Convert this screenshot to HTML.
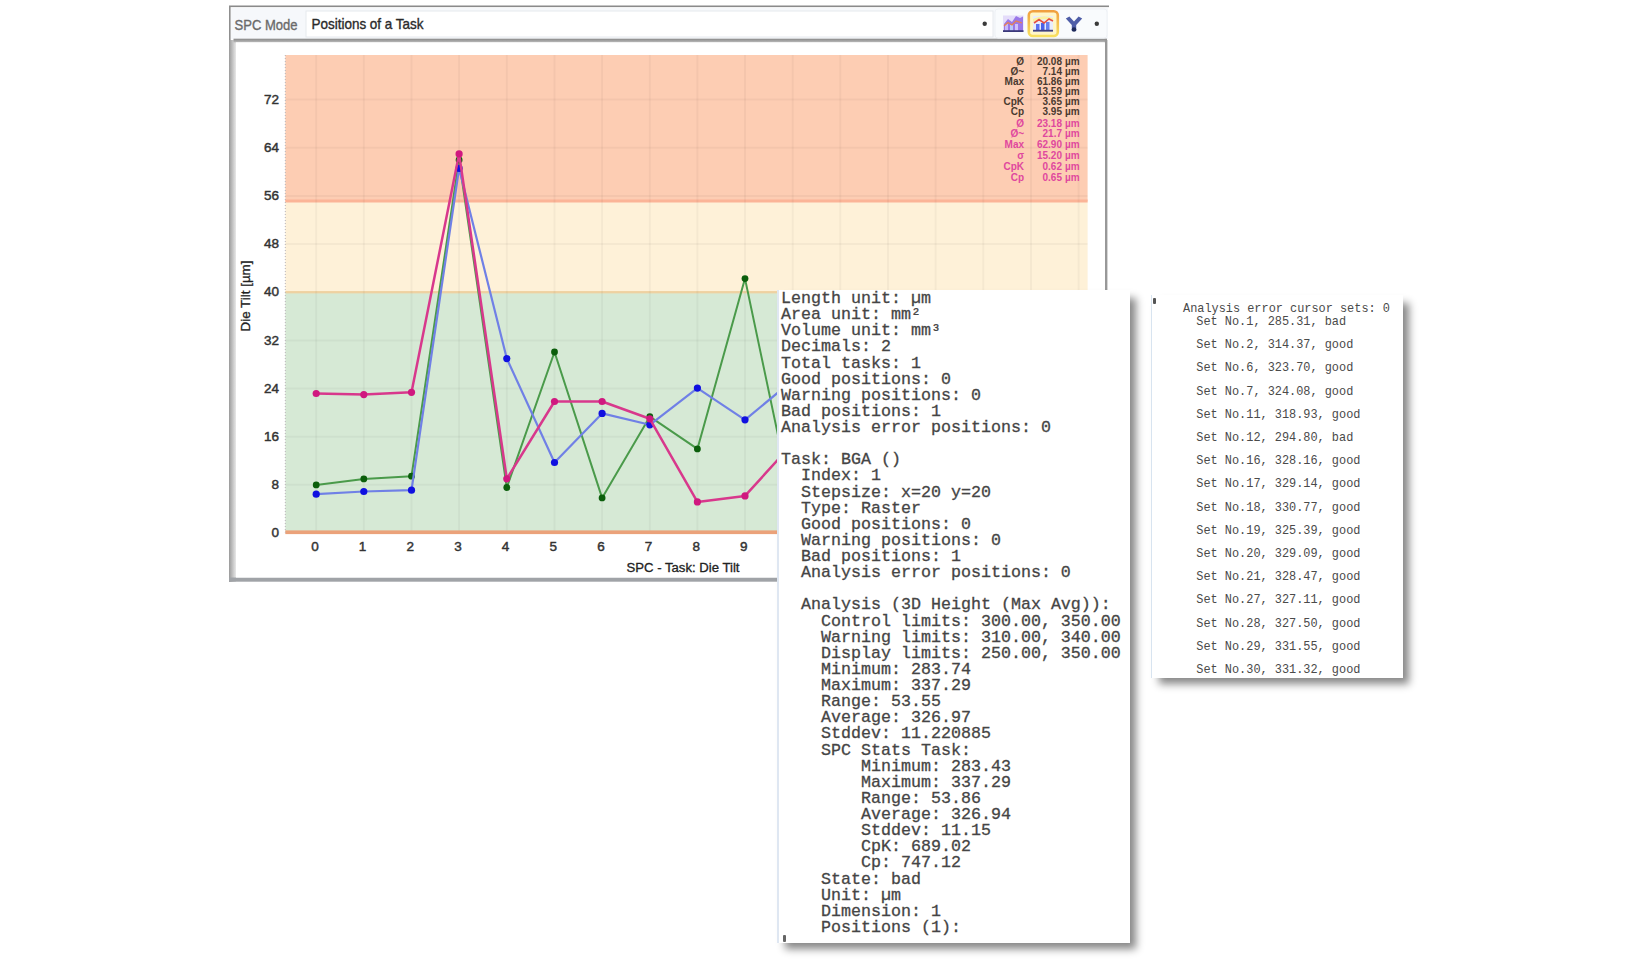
<!DOCTYPE html>
<html><head><meta charset="utf-8"><style>
html,body{margin:0;padding:0;background:#fff;width:1650px;height:979px;overflow:hidden;position:relative}
.pop{position:absolute;background:#fff;box-shadow:7px 7px 8px -1px rgba(0,0,0,0.47);}
.p1{left:777px;top:290px;width:351px;height:653px;border-left:2px solid #dfe7f2}
.p1 pre{margin:0;position:absolute;left:2px;top:1px;-webkit-text-stroke:0.3px #4a4a4a;font-family:"Liberation Mono",monospace;font-size:16.67px;line-height:16.13px;color:#444;}
.p2{left:1151px;top:295px;width:251px;height:383px;border-left:1px solid #d8e4f0}
.p2 .h{position:absolute;left:31px;top:7px;font-family:"Liberation Mono",monospace;font-size:11.9px;color:#4a4a4a;white-space:pre}
.p2 .s{position:absolute;left:44.3px;font-family:"Liberation Mono",monospace;font-size:11.9px;color:#4a4a4a;white-space:pre}
</style></head><body>
<svg width="1650" height="979" viewBox="0 0 1650 979" style="position:absolute;left:0;top:0"><defs><linearGradient id="lb" x1="0" x2="1"><stop offset="0" stop-color="#9a9a9a"/><stop offset="1" stop-color="#e8e8e8"/></linearGradient><linearGradient id="tb" x1="0" y1="0" x2="0" y2="1"><stop offset="0" stop-color="#888"/><stop offset="1" stop-color="#bbb"/></linearGradient></defs><rect x="229.5" y="6" width="880" height="576" fill="#fff"/><rect x="229" y="5.5" width="880" height="1.6" fill="#8a8a8a"/><rect x="231" y="8" width="877" height="31" fill="#f6f8fb"/><rect x="306" y="11" width="687" height="26" fill="#fff" stroke="#e6e9ee" stroke-width="1"/><rect x="229" y="6" width="1.6" height="36" fill="#8f8f8f"/><rect x="229" y="40" width="7" height="542" fill="url(#lb)"/><rect x="233.5" y="38.7" width="873.5" height="3.7" fill="url(#tb)"/><rect x="1104.8" y="40" width="2.6" height="540" fill="#989898"/><rect x="229" y="577.5" width="878" height="4.2" fill="#a0a3a7"/><rect x="236" y="42.5" width="869" height="535" fill="#fff"/><rect x="285.3" y="55.0" width="802.3" height="146.0" fill="#fdcdb3"/><rect x="285.3" y="201.0" width="802.3" height="91.19999999999999" fill="#fef1d8"/><rect x="285.3" y="292.2" width="802.3" height="240.40000000000003" fill="#d6e9d5"/><rect x="285.3" y="199.5" width="802.3" height="3" fill="#fbb497"/><rect x="285.3" y="291.0" width="802.3" height="2.4" fill="#f6d9a8"/><line x1="316.2" y1="55.0" x2="316.2" y2="532.6" stroke="#000" stroke-opacity="0.035" stroke-width="2"/><line x1="363.8" y1="55.0" x2="363.8" y2="532.6" stroke="#000" stroke-opacity="0.035" stroke-width="2"/><line x1="411.5" y1="55.0" x2="411.5" y2="532.6" stroke="#000" stroke-opacity="0.035" stroke-width="2"/><line x1="459.1" y1="55.0" x2="459.1" y2="532.6" stroke="#000" stroke-opacity="0.035" stroke-width="2"/><line x1="506.8" y1="55.0" x2="506.8" y2="532.6" stroke="#000" stroke-opacity="0.035" stroke-width="2"/><line x1="554.5" y1="55.0" x2="554.5" y2="532.6" stroke="#000" stroke-opacity="0.035" stroke-width="2"/><line x1="602.1" y1="55.0" x2="602.1" y2="532.6" stroke="#000" stroke-opacity="0.035" stroke-width="2"/><line x1="649.8" y1="55.0" x2="649.8" y2="532.6" stroke="#000" stroke-opacity="0.035" stroke-width="2"/><line x1="697.4" y1="55.0" x2="697.4" y2="532.6" stroke="#000" stroke-opacity="0.035" stroke-width="2"/><line x1="745.0" y1="55.0" x2="745.0" y2="532.6" stroke="#000" stroke-opacity="0.035" stroke-width="2"/><line x1="792.7" y1="55.0" x2="792.7" y2="532.6" stroke="#000" stroke-opacity="0.035" stroke-width="2"/><line x1="840.3" y1="55.0" x2="840.3" y2="532.6" stroke="#000" stroke-opacity="0.035" stroke-width="2"/><line x1="888.0" y1="55.0" x2="888.0" y2="532.6" stroke="#000" stroke-opacity="0.035" stroke-width="2"/><line x1="935.6" y1="55.0" x2="935.6" y2="532.6" stroke="#000" stroke-opacity="0.035" stroke-width="2"/><line x1="983.3" y1="55.0" x2="983.3" y2="532.6" stroke="#000" stroke-opacity="0.035" stroke-width="2"/><line x1="1031.0" y1="55.0" x2="1031.0" y2="532.6" stroke="#000" stroke-opacity="0.035" stroke-width="2"/><line x1="1078.6" y1="55.0" x2="1078.6" y2="532.6" stroke="#000" stroke-opacity="0.035" stroke-width="2"/><line x1="285.3" y1="484.8" x2="1087.6" y2="484.8" stroke="#000" stroke-opacity="0.035" stroke-width="2"/><line x1="285.3" y1="436.7" x2="1087.6" y2="436.7" stroke="#000" stroke-opacity="0.035" stroke-width="2"/><line x1="285.3" y1="388.5" x2="1087.6" y2="388.5" stroke="#000" stroke-opacity="0.035" stroke-width="2"/><line x1="285.3" y1="340.4" x2="1087.6" y2="340.4" stroke="#000" stroke-opacity="0.035" stroke-width="2"/><line x1="285.3" y1="292.2" x2="1087.6" y2="292.2" stroke="#000" stroke-opacity="0.035" stroke-width="2"/><line x1="285.3" y1="244.0" x2="1087.6" y2="244.0" stroke="#000" stroke-opacity="0.035" stroke-width="2"/><line x1="285.3" y1="195.9" x2="1087.6" y2="195.9" stroke="#000" stroke-opacity="0.035" stroke-width="2"/><line x1="285.3" y1="147.7" x2="1087.6" y2="147.7" stroke="#000" stroke-opacity="0.035" stroke-width="2"/><line x1="285.3" y1="99.6" x2="1087.6" y2="99.6" stroke="#000" stroke-opacity="0.035" stroke-width="2"/><rect x="285.3" y="530.4" width="802.3" height="3.7" fill="#eba27a"/><line x1="285.3" y1="55.0" x2="285.3" y2="532.6" stroke="#b8b4b8" stroke-width="1" stroke-dasharray="1,2"/><polyline points="316.2,484.9 363.8,478.9 411.5,476.2 459.1,160.0 506.8,487.5 554.5,352.0 602.1,497.9 649.8,416.7 697.4,448.9 745.0,278.6 792.7,504.9" fill="none" stroke="#4a9a4a" stroke-width="2.0" stroke-linejoin="round"/><circle cx="316.2" cy="484.9" r="3.4" fill="#0b5e0b"/><circle cx="363.8" cy="478.9" r="3.4" fill="#0b5e0b"/><circle cx="411.5" cy="476.2" r="3.4" fill="#0b5e0b"/><circle cx="459.1" cy="160.0" r="3.4" fill="#0b5e0b"/><circle cx="506.8" cy="487.5" r="3.4" fill="#0b5e0b"/><circle cx="554.5" cy="352.0" r="3.4" fill="#0b5e0b"/><circle cx="602.1" cy="497.9" r="3.4" fill="#0b5e0b"/><circle cx="649.8" cy="416.7" r="3.4" fill="#0b5e0b"/><circle cx="697.4" cy="448.9" r="3.4" fill="#0b5e0b"/><circle cx="745.0" cy="278.6" r="3.4" fill="#0b5e0b"/><polyline points="316.2,494.2 363.8,491.5 411.5,490.2 459.1,168.4 506.8,358.6 554.5,462.5 602.1,413.4 649.8,424.8 697.4,388.1 745.0,419.8 792.7,380.3" fill="none" stroke="#7080e6" stroke-width="2.2" stroke-linejoin="round"/><circle cx="316.2" cy="494.2" r="3.6" fill="#1010e0"/><circle cx="363.8" cy="491.5" r="3.6" fill="#1010e0"/><circle cx="411.5" cy="490.2" r="3.6" fill="#1010e0"/><circle cx="459.1" cy="168.4" r="3.6" fill="#1010e0"/><circle cx="506.8" cy="358.6" r="3.6" fill="#1010e0"/><circle cx="554.5" cy="462.5" r="3.6" fill="#1010e0"/><circle cx="602.1" cy="413.4" r="3.6" fill="#1010e0"/><circle cx="649.8" cy="424.8" r="3.6" fill="#1010e0"/><circle cx="697.4" cy="388.1" r="3.6" fill="#1010e0"/><circle cx="745.0" cy="419.8" r="3.6" fill="#1010e0"/><polyline points="316.2,393.5 363.8,394.6 411.5,392.3 459.1,153.9 506.8,478.8 554.5,401.5 602.1,401.5 649.8,418.8 697.4,501.9 745.0,495.9 792.7,443.5" fill="none" stroke="#d8388c" stroke-width="2.5" stroke-linejoin="round"/><circle cx="316.2" cy="393.5" r="3.6" fill="#d0187f"/><circle cx="363.8" cy="394.6" r="3.6" fill="#d0187f"/><circle cx="411.5" cy="392.3" r="3.6" fill="#d0187f"/><circle cx="459.1" cy="153.9" r="3.6" fill="#d0187f"/><circle cx="506.8" cy="478.8" r="3.6" fill="#d0187f"/><circle cx="554.5" cy="401.5" r="3.6" fill="#d0187f"/><circle cx="602.1" cy="401.5" r="3.6" fill="#d0187f"/><circle cx="649.8" cy="418.8" r="3.6" fill="#d0187f"/><circle cx="697.4" cy="501.9" r="3.6" fill="#d0187f"/><circle cx="745.0" cy="495.9" r="3.6" fill="#d0187f"/><text x="279" y="537.1" text-anchor="end" font-family="Liberation Sans" font-size="13.5" fill="#333" stroke="#333" stroke-width="0.45">0</text><text x="279" y="488.9" text-anchor="end" font-family="Liberation Sans" font-size="13.5" fill="#333" stroke="#333" stroke-width="0.45">8</text><text x="279" y="440.8" text-anchor="end" font-family="Liberation Sans" font-size="13.5" fill="#333" stroke="#333" stroke-width="0.45">16</text><text x="279" y="392.6" text-anchor="end" font-family="Liberation Sans" font-size="13.5" fill="#333" stroke="#333" stroke-width="0.45">24</text><text x="279" y="344.5" text-anchor="end" font-family="Liberation Sans" font-size="13.5" fill="#333" stroke="#333" stroke-width="0.45">32</text><text x="279" y="296.3" text-anchor="end" font-family="Liberation Sans" font-size="13.5" fill="#333" stroke="#333" stroke-width="0.45">40</text><text x="279" y="248.1" text-anchor="end" font-family="Liberation Sans" font-size="13.5" fill="#333" stroke="#333" stroke-width="0.45">48</text><text x="279" y="200.0" text-anchor="end" font-family="Liberation Sans" font-size="13.5" fill="#333" stroke="#333" stroke-width="0.45">56</text><text x="279" y="151.8" text-anchor="end" font-family="Liberation Sans" font-size="13.5" fill="#333" stroke="#333" stroke-width="0.45">64</text><text x="279" y="103.7" text-anchor="end" font-family="Liberation Sans" font-size="13.5" fill="#333" stroke="#333" stroke-width="0.45">72</text><text x="315.0" y="550.5" text-anchor="middle" font-family="Liberation Sans" font-size="13.5" fill="#333" stroke="#333" stroke-width="0.45">0</text><text x="362.6" y="550.5" text-anchor="middle" font-family="Liberation Sans" font-size="13.5" fill="#333" stroke="#333" stroke-width="0.45">1</text><text x="410.3" y="550.5" text-anchor="middle" font-family="Liberation Sans" font-size="13.5" fill="#333" stroke="#333" stroke-width="0.45">2</text><text x="457.9" y="550.5" text-anchor="middle" font-family="Liberation Sans" font-size="13.5" fill="#333" stroke="#333" stroke-width="0.45">3</text><text x="505.6" y="550.5" text-anchor="middle" font-family="Liberation Sans" font-size="13.5" fill="#333" stroke="#333" stroke-width="0.45">4</text><text x="553.2" y="550.5" text-anchor="middle" font-family="Liberation Sans" font-size="13.5" fill="#333" stroke="#333" stroke-width="0.45">5</text><text x="600.9" y="550.5" text-anchor="middle" font-family="Liberation Sans" font-size="13.5" fill="#333" stroke="#333" stroke-width="0.45">6</text><text x="648.5" y="550.5" text-anchor="middle" font-family="Liberation Sans" font-size="13.5" fill="#333" stroke="#333" stroke-width="0.45">7</text><text x="696.2" y="550.5" text-anchor="middle" font-family="Liberation Sans" font-size="13.5" fill="#333" stroke="#333" stroke-width="0.45">8</text><text x="743.8" y="550.5" text-anchor="middle" font-family="Liberation Sans" font-size="13.5" fill="#333" stroke="#333" stroke-width="0.45">9</text><text x="683" y="572" text-anchor="middle" font-family="Liberation Sans" font-size="12.5" fill="#222" stroke="#222" stroke-width="0.3" textLength="113" lengthAdjust="spacingAndGlyphs">SPC - Task: Die Tilt</text><text transform="translate(250,296) rotate(-90)" text-anchor="middle" font-family="Liberation Sans" font-size="12.5" fill="#222" stroke="#222" stroke-width="0.3" textLength="71" lengthAdjust="spacingAndGlyphs">Die Tilt [µm]</text><text x="234.5" y="29.5" font-family="Liberation Sans" font-size="14.5" fill="#6a6a6a" stroke="#6a6a6a" stroke-width="0.35" textLength="63" lengthAdjust="spacingAndGlyphs">SPC Mode</text><text x="311.5" y="29.3" font-family="Liberation Sans" font-size="14.5" fill="#2a2a2a" stroke="#2a2a2a" stroke-width="0.35" textLength="112" lengthAdjust="spacingAndGlyphs">Positions of a Task</text><rect x="995" y="9" width="112" height="29" rx="3" fill="#f9fbfd" stroke="#eef1f5" stroke-width="1"/><defs><linearGradient id="ob" x1="0" y1="0" x2="0" y2="1"><stop offset="0" stop-color="#f0a040"/><stop offset="1" stop-color="#f8e060"/></linearGradient></defs><rect x="1003" y="15.5" width="20.5" height="16.5" fill="#e4dcfa"/><path d="M1004,31 L1004,24 L1008,19 L1012,22 L1016,16 L1020,18 L1023,16.5 L1023,31 Z" fill="#9a78e8"/><rect x="1005" y="24" width="3" height="7" fill="#c8b8f8"/><rect x="1010" y="25" width="3" height="6" fill="#b8c8f8"/><rect x="1015" y="24" width="3" height="7" fill="#d0c0f8"/><polyline points="1004,26 1008,22.5 1012,25 1016,21 1022,23" fill="none" stroke="#e88050" stroke-width="1.2"/><rect x="1003" y="30.2" width="20.5" height="1.8" fill="#3a3a7a"/><rect x="1028.8" y="11.2" width="29" height="24.8" rx="4" fill="#fff6c8" stroke="url(#ob)" stroke-width="2.6"/><rect x="1033" y="16" width="20" height="15.5" fill="#e8ecfc"/><path d="M1033,19 Q1043,14 1053,18 L1053,21 Q1043,17 1033,22 Z" fill="#fbf1a0"/><rect x="1036" y="24" width="3.5" height="6" fill="#5a70f0"/><rect x="1041" y="23" width="3.5" height="7" fill="#4a60e8"/><rect x="1046" y="22" width="3.5" height="8" fill="#6a80f0"/><polyline points="1034,23 1039,19.5 1044,23 1049,19 1053,21" fill="none" stroke="#e85040" stroke-width="1.6"/><rect x="1033" y="29.8" width="20" height="1.8" fill="#40407a"/><path d="M1065.8,18.5 L1071.8,25 L1071.8,31 L1076.2,31 L1076.2,25 L1082.2,18.5 L1078.6,16.6 L1074,21.5 L1069.4,16.6 Z" fill="#4f5ea8"/><circle cx="1074" cy="29.5" r="2.3" fill="#1e2a5a"/><circle cx="984.7" cy="23.8" r="2.2" fill="#3a3a3a"/><circle cx="1096.8" cy="23.8" r="2.2" fill="#3a3a3a"/><text x="1024" y="64.5" text-anchor="end" font-family="Liberation Sans" font-size="10" font-weight="bold" fill="#4a3a30">Ø</text><text x="1062" y="64.5" text-anchor="end" font-family="Liberation Sans" font-size="10" font-weight="bold" fill="#4a3a30">20.08</text><text x="1065" y="64.5" font-family="Liberation Sans" font-size="10" font-weight="bold" fill="#4a3a30">µm</text><text x="1024" y="74.6" text-anchor="end" font-family="Liberation Sans" font-size="10" font-weight="bold" fill="#4a3a30">Ø~</text><text x="1062" y="74.6" text-anchor="end" font-family="Liberation Sans" font-size="10" font-weight="bold" fill="#4a3a30">7.14</text><text x="1065" y="74.6" font-family="Liberation Sans" font-size="10" font-weight="bold" fill="#4a3a30">µm</text><text x="1024" y="84.7" text-anchor="end" font-family="Liberation Sans" font-size="10" font-weight="bold" fill="#4a3a30">Max</text><text x="1062" y="84.7" text-anchor="end" font-family="Liberation Sans" font-size="10" font-weight="bold" fill="#4a3a30">61.86</text><text x="1065" y="84.7" font-family="Liberation Sans" font-size="10" font-weight="bold" fill="#4a3a30">µm</text><text x="1024" y="94.8" text-anchor="end" font-family="Liberation Sans" font-size="10" font-weight="bold" fill="#4a3a30">σ</text><text x="1062" y="94.8" text-anchor="end" font-family="Liberation Sans" font-size="10" font-weight="bold" fill="#4a3a30">13.59</text><text x="1065" y="94.8" font-family="Liberation Sans" font-size="10" font-weight="bold" fill="#4a3a30">µm</text><text x="1024" y="104.9" text-anchor="end" font-family="Liberation Sans" font-size="10" font-weight="bold" fill="#4a3a30">CpK</text><text x="1062" y="104.9" text-anchor="end" font-family="Liberation Sans" font-size="10" font-weight="bold" fill="#4a3a30">3.65</text><text x="1065" y="104.9" font-family="Liberation Sans" font-size="10" font-weight="bold" fill="#4a3a30">µm</text><text x="1024" y="115.0" text-anchor="end" font-family="Liberation Sans" font-size="10" font-weight="bold" fill="#4a3a30">Cp</text><text x="1062" y="115.0" text-anchor="end" font-family="Liberation Sans" font-size="10" font-weight="bold" fill="#4a3a30">3.95</text><text x="1065" y="115.0" font-family="Liberation Sans" font-size="10" font-weight="bold" fill="#4a3a30">µm</text><text x="1024" y="126.5" text-anchor="end" font-family="Liberation Sans" font-size="10" font-weight="bold" fill="#e0489e">Ø</text><text x="1062" y="126.5" text-anchor="end" font-family="Liberation Sans" font-size="10" font-weight="bold" fill="#e0489e">23.18</text><text x="1065" y="126.5" font-family="Liberation Sans" font-size="10" font-weight="bold" fill="#e0489e">µm</text><text x="1024" y="137.3" text-anchor="end" font-family="Liberation Sans" font-size="10" font-weight="bold" fill="#e0489e">Ø~</text><text x="1062" y="137.3" text-anchor="end" font-family="Liberation Sans" font-size="10" font-weight="bold" fill="#e0489e">21.7</text><text x="1065" y="137.3" font-family="Liberation Sans" font-size="10" font-weight="bold" fill="#e0489e">µm</text><text x="1024" y="148.1" text-anchor="end" font-family="Liberation Sans" font-size="10" font-weight="bold" fill="#e0489e">Max</text><text x="1062" y="148.1" text-anchor="end" font-family="Liberation Sans" font-size="10" font-weight="bold" fill="#e0489e">62.90</text><text x="1065" y="148.1" font-family="Liberation Sans" font-size="10" font-weight="bold" fill="#e0489e">µm</text><text x="1024" y="158.9" text-anchor="end" font-family="Liberation Sans" font-size="10" font-weight="bold" fill="#e0489e">σ</text><text x="1062" y="158.9" text-anchor="end" font-family="Liberation Sans" font-size="10" font-weight="bold" fill="#e0489e">15.20</text><text x="1065" y="158.9" font-family="Liberation Sans" font-size="10" font-weight="bold" fill="#e0489e">µm</text><text x="1024" y="169.7" text-anchor="end" font-family="Liberation Sans" font-size="10" font-weight="bold" fill="#e0489e">CpK</text><text x="1062" y="169.7" text-anchor="end" font-family="Liberation Sans" font-size="10" font-weight="bold" fill="#e0489e">0.62</text><text x="1065" y="169.7" font-family="Liberation Sans" font-size="10" font-weight="bold" fill="#e0489e">µm</text><text x="1024" y="180.5" text-anchor="end" font-family="Liberation Sans" font-size="10" font-weight="bold" fill="#e0489e">Cp</text><text x="1062" y="180.5" text-anchor="end" font-family="Liberation Sans" font-size="10" font-weight="bold" fill="#e0489e">0.65</text><text x="1065" y="180.5" font-family="Liberation Sans" font-size="10" font-weight="bold" fill="#e0489e">µm</text></svg>
<div class="pop p1"><div style="position:absolute;left:4px;top:645px;width:3px;height:7px;background:#666;border-radius:1px"></div><pre>Length unit: µm
Area unit: mm²
Volume unit: mm³
Decimals: 2
Total tasks: 1
Good positions: 0
Warning positions: 0
Bad positions: 1
Analysis error positions: 0

Task: BGA ()
  Index: 1
  Stepsize: x=20 y=20
  Type: Raster
  Good positions: 0
  Warning positions: 0
  Bad positions: 1
  Analysis error positions: 0

  Analysis (3D Height (Max Avg)):
    Control limits: 300.00, 350.00
    Warning limits: 310.00, 340.00
    Display limits: 250.00, 350.00
    Minimum: 283.74
    Maximum: 337.29
    Range: 53.55
    Average: 326.97
    Stddev: 11.220885
    SPC Stats Task:
        Minimum: 283.43
        Maximum: 337.29
        Range: 53.86
        Average: 326.94
        Stddev: 11.15
        CpK: 689.02
        Cp: 747.12
    State: bad
    Unit: µm
    Dimension: 1
    Positions (1):</pre></div>
<div class="pop p2"><div style="position:absolute;left:1px;top:3px;width:2.5px;height:6px;background:#555;border-radius:1px"></div><div class="h">Analysis error cursor sets: 0</div>
<div class="s" style="top:20.0px">Set No.1, 285.31, bad</div><div class="s" style="top:43.2px">Set No.2, 314.37, good</div><div class="s" style="top:66.4px">Set No.6, 323.70, good</div><div class="s" style="top:89.6px">Set No.7, 324.08, good</div><div class="s" style="top:112.8px">Set No.11, 318.93, good</div><div class="s" style="top:136.0px">Set No.12, 294.80, bad</div><div class="s" style="top:159.2px">Set No.16, 328.16, good</div><div class="s" style="top:182.4px">Set No.17, 329.14, good</div><div class="s" style="top:205.6px">Set No.18, 330.77, good</div><div class="s" style="top:228.8px">Set No.19, 325.39, good</div><div class="s" style="top:252.0px">Set No.20, 329.09, good</div><div class="s" style="top:275.2px">Set No.21, 328.47, good</div><div class="s" style="top:298.4px">Set No.27, 327.11, good</div><div class="s" style="top:321.6px">Set No.28, 327.50, good</div><div class="s" style="top:344.8px">Set No.29, 331.55, good</div><div class="s" style="top:368.0px">Set No.30, 331.32, good</div>
</div>
</body></html>
